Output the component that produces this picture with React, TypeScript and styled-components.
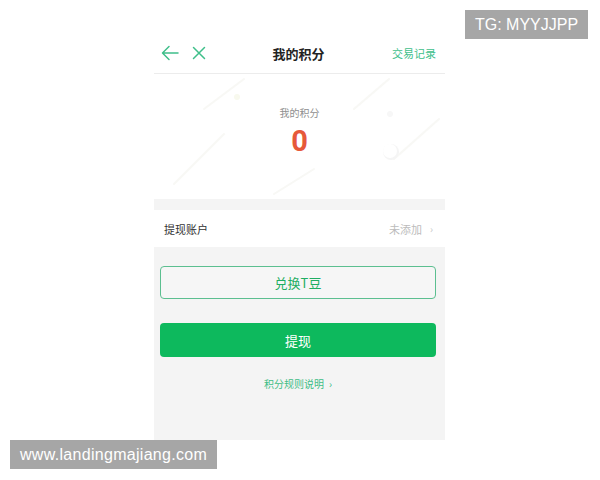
import React from "react";
import styled, { createGlobalStyle } from "styled-components";

const Global = createGlobalStyle`
  html, body { margin: 0; padding: 0; background: #ffffff; }
  body { font-family: "Noto Sans CJK SC", "Noto Sans", sans-serif; width: 600px; height: 480px; overflow: hidden; }
`;

const Page = styled.div`
  position: relative;
  width: 600px;
  height: 480px;
  display: flex;
  justify-content: flex-start;
  padding-top: 33px;
  box-sizing: border-box;
`;

const Phone = styled.div`
  margin-left: 154px;
  width: 291px;
  height: 407px;
  background: #f4f4f4;
  display: flex;
  flex-direction: column;
`;

const Header = styled.div`
  height: 40px;
  background: #fff;
  border-bottom: 1px solid #ececec;
  display: grid;
  grid-template-columns: 1fr auto 1fr;
  align-items: center;
  padding: 0 9px 0 7px;
`;

const Icons = styled.div`
  display: flex;
  align-items: center;
  gap: 13px;
`;

const Title = styled.div`
  font-size: 13px;
  font-weight: 700;
  color: #222;
`;

const RightLink = styled.div`
  justify-self: end;
  font-size: 11px;
  color: #41c08c;
`;

const Hero = styled.div`
  position: relative;
  height: 125px;
  background: #fff;
  display: flex;
  flex-direction: column;
  align-items: center;
  overflow: hidden;
`;

const Deco = styled.svg`
  position: absolute;
  inset: 0;
`;

const HeroLabel = styled.div`
  margin-top: 31px;
  font-size: 10px;
  color: #8f8f8f;
  position: relative;
`;

const Score = styled.div`
  margin-top: 4px;
  font-family: "Roboto", "Liberation Sans", sans-serif;
  font-size: 29px;
  font-weight: 700;
  line-height: 34px;
  color: #e6593a;
  position: relative;
`;

const Row = styled.div`
  margin-top: 11px;
  height: 37px;
  background: #fff;
  display: flex;
  align-items: center;
  justify-content: space-between;
  padding: 0 12px 0 10px;
`;

const RowLabel = styled.div`
  font-size: 11px;
  color: #333;
`;

const RowValue = styled.div`
  font-size: 11px;
  color: #bcbcbc;
  display: flex;
  align-items: center;
  gap: 8px;
`;

const Chevron = styled.span`
  color: #c8c8c8;
  font-size: 10px;
`;

const Actions = styled.div`
  padding: 19px 9px 0 6px;
  display: flex;
  flex-direction: column;
  align-items: stretch;
`;

const Button = styled.div<{ $primary?: boolean }>`
  height: ${(p) => (p.$primary ? 34 : 33)}px;
  box-sizing: border-box;
  border-radius: 4px;
  display: flex;
  align-items: center;
  justify-content: center;
  font-size: 13px;
  margin-bottom: ${(p) => (p.$primary ? 0 : 24)}px;
  background: ${(p) => (p.$primary ? "#0db95d" : "#f6f6f6")};
  color: ${(p) => (p.$primary ? "#ffffff" : "#1fae63")};
  border: ${(p) => (p.$primary ? "none" : "1.5px solid #5cbf90")};
`;

const RuleLink = styled.div`
  margin-top: 19px;
  align-self: center;
  font-size: 10px;
  color: #3fbd86;
  display: flex;
  gap: 5px;
  align-items: center;
`;

const Watermark = styled.div<{ $top: number; $left: number; $spacing?: number }>`
  position: absolute;
  top: ${(p) => p.$top}px;
  left: ${(p) => p.$left}px;
  background: #a6a6a6;
  color: #fff;
  font-family: "Liberation Sans", Arial, sans-serif;
  font-size: 16px;
  letter-spacing: ${(p) => p.$spacing ?? 0}px;
  line-height: 29px;
  padding: 0 10px;
`;

export default function App() {
  return (
    <>
      <Global />
      <Page>
        <Phone>
          <Header>
            <Icons>
              <svg width="18" height="16" viewBox="0 0 18 16" fill="none" stroke="#3fbf8a" strokeWidth="1.5" strokeLinecap="round" strokeLinejoin="round">
                <path d="M17 8H2M8 1.5L1.5 8 8 14.5" />
              </svg>
              <svg width="14" height="14" viewBox="0 0 14 14" fill="none" stroke="#3fbf8a" strokeWidth="1.5" strokeLinecap="round">
                <path d="M1.5 1.5l11 11M12.5 1.5l-11 11" />
              </svg>
            </Icons>
            <Title>我的积分</Title>
            <RightLink>交易记录</RightLink>
          </Header>
          <Hero>
            <Deco width="291" height="125" viewBox="0 0 291 125">
              <g stroke="#f8f8f5" strokeWidth="2" strokeLinecap="round">
                <path d="M20 110 L70 60" />
                <path d="M200 35 L235 5" />
                <path d="M240 85 L285 45" />
                <path d="M50 35 L90 5" />
                <path d="M120 120 L160 95" />
              </g>
              <circle cx="83" cy="23" r="3" fill="#f8f9ee" />
              <circle cx="236" cy="40" r="3" fill="#f7f7f7" />
              <circle cx="237" cy="78" r="8" fill="#f5f5f5" />
              <circle cx="236" cy="77" r="7" fill="#ffffff" />
            </Deco>
            <HeroLabel>我的积分</HeroLabel>
            <Score>0</Score>
          </Hero>
          <Row>
            <RowLabel>提现账户</RowLabel>
            <RowValue>
              未添加<Chevron>›</Chevron>
            </RowValue>
          </Row>
          <Actions>
            <Button>兑换T豆</Button>
            <Button $primary>提现</Button>
            <RuleLink>
              积分规则说明<span>›</span>
            </RuleLink>
          </Actions>
        </Phone>
        <Watermark $top={10} $left={465}>TG: MYYJJPP</Watermark>
        <Watermark $top={440} $left={10} $spacing={0.3}>www.landingmajiang.com</Watermark>
      </Page>
    </>
  );
}
